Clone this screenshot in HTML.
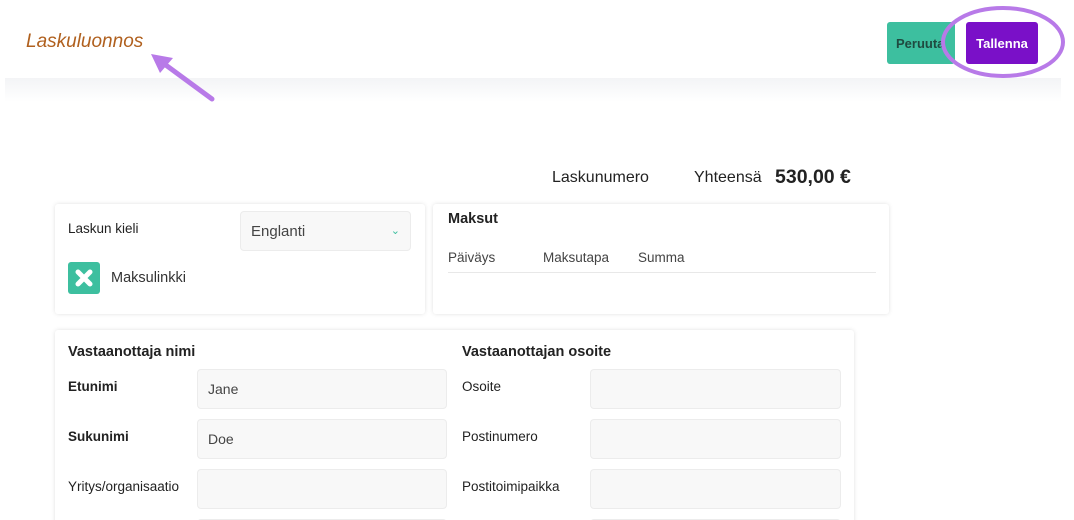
<!DOCTYPE html>
<html style="width:1074px;height:520px;overflow:hidden"><head><meta charset="utf-8"><style>
*{margin:0;padding:0;box-sizing:border-box}
body{width:1074px;height:520px;overflow:hidden;background:#fff;font-family:"Liberation Sans",sans-serif;color:#222;position:relative}
.a{position:absolute;white-space:nowrap}
.hdrsh{position:absolute;left:5px;top:78px;width:1056px;height:24px;background:linear-gradient(#f3f4f6,#fff)}
.card{position:absolute;background:#fff;box-shadow:0 0 4px rgba(0,0,0,.12);border-radius:3px}
.inp{position:absolute;background:#f8f8f8;border:1px solid #ececec;border-radius:4px;font-size:14px;color:#444;padding:11px 10px}
.lb{font-size:13.5px;color:#222}
.b{font-weight:bold}
</style></head><body>
<div class="hdrsh"></div>
<div class="a" style="left:26px;top:31px;font-size:19px;font-style:italic;color:#b0601e">Laskuluonnos</div>
<svg class="a" style="left:0;top:0" width="1074" height="110">
<line x1="212" y1="99" x2="163" y2="63" stroke="#b87ae8" stroke-width="5" stroke-linecap="round"/>
<polygon points="151,54 173,58 160,73" fill="#b87ae8"/>
</svg>
<div class="a" style="left:887px;top:22px;width:68px;height:42px;background:#3dbf9f;border-radius:3px;font-size:13px;font-weight:bold;color:#1f4a40;padding:14px 0 0 9px;overflow:hidden">Peruuta</div>
<div class="a" style="left:966px;top:22px;width:72px;height:42px;background:#7a10c8;border-radius:3px;font-size:13px;font-weight:bold;color:#fff;text-align:center;padding-top:14px">Tallenna</div>
<svg class="a" style="left:930px;top:0" width="144" height="90"><ellipse cx="73" cy="42" rx="60" ry="34" fill="none" stroke="#b87ae8" stroke-width="4"/></svg>

<div class="a" style="left:552px;top:169px;font-size:16px">Laskunumero</div>
<div class="a" style="left:694px;top:169px;font-size:16px">Yhteensä</div>
<div class="a b" style="left:775px;top:166px;font-size:19.5px;color:#222">530,00 €</div>

<div class="card" style="left:55px;top:204px;width:370px;height:110px"></div>
<div class="a lb" style="left:68px;top:221px">Laskun kieli</div>
<div class="inp" style="left:240px;top:211px;width:171px;height:40px;font-size:15px;padding-top:11px">Englanti<span style="position:absolute;right:10px;top:12px;color:#3dbf9f;font-size:11px">&#8964;</span></div>
<div class="a" style="left:68px;top:262px;width:32px;height:32px;background:#3dbf9f;border-radius:3px"><svg width="32" height="32"><path d="M10 10L22 22M22 10L10 22" stroke="#fff" stroke-width="5" stroke-linecap="round"/></svg></div>
<div class="a" style="left:111px;top:270px;font-size:14.5px;color:#333">Maksulinkki</div>

<div class="card" style="left:433px;top:204px;width:456px;height:110px"></div>
<div class="a b" style="left:448px;top:211px;font-size:14.5px">Maksut</div>
<div class="a lb" style="left:448px;top:250px;color:#444">Päiväys</div>
<div class="a lb" style="left:543px;top:250px;color:#444">Maksutapa</div>
<div class="a lb" style="left:638px;top:250px;color:#444">Summa</div>
<div class="a" style="left:448px;top:272px;width:428px;height:1px;background:#e8e8e8"></div>

<div class="card" style="left:55px;top:330px;width:799px;height:200px"></div>
<div class="a b" style="left:68px;top:344px;font-size:14.5px">Vastaanottaja nimi</div>
<div class="a b" style="left:462px;top:344px;font-size:14.5px">Vastaanottajan osoite</div>
<div class="a lb b" style="left:68px;top:379px">Etunimi</div>
<div class="a lb b" style="left:68px;top:429px">Sukunimi</div>
<div class="a lb" style="left:68px;top:479px">Yritys/organisaatio</div>
<div class="a lb" style="left:462px;top:379px">Osoite</div>
<div class="a lb" style="left:462px;top:429px">Postinumero</div>
<div class="a lb" style="left:462px;top:479px">Postitoimipaikka</div>
<div class="inp" style="left:197px;top:369px;width:250px;height:40px">Jane</div>
<div class="inp" style="left:197px;top:419px;width:250px;height:40px">Doe</div>
<div class="inp" style="left:197px;top:469px;width:250px;height:40px"></div>
<div class="inp" style="left:197px;top:519px;width:250px;height:1px"></div>
<div class="inp" style="left:590px;top:369px;width:251px;height:40px"></div>
<div class="inp" style="left:590px;top:419px;width:251px;height:40px"></div>
<div class="inp" style="left:590px;top:469px;width:251px;height:40px"></div>
<div class="inp" style="left:590px;top:519px;width:251px;height:1px"></div>
</body></html>
